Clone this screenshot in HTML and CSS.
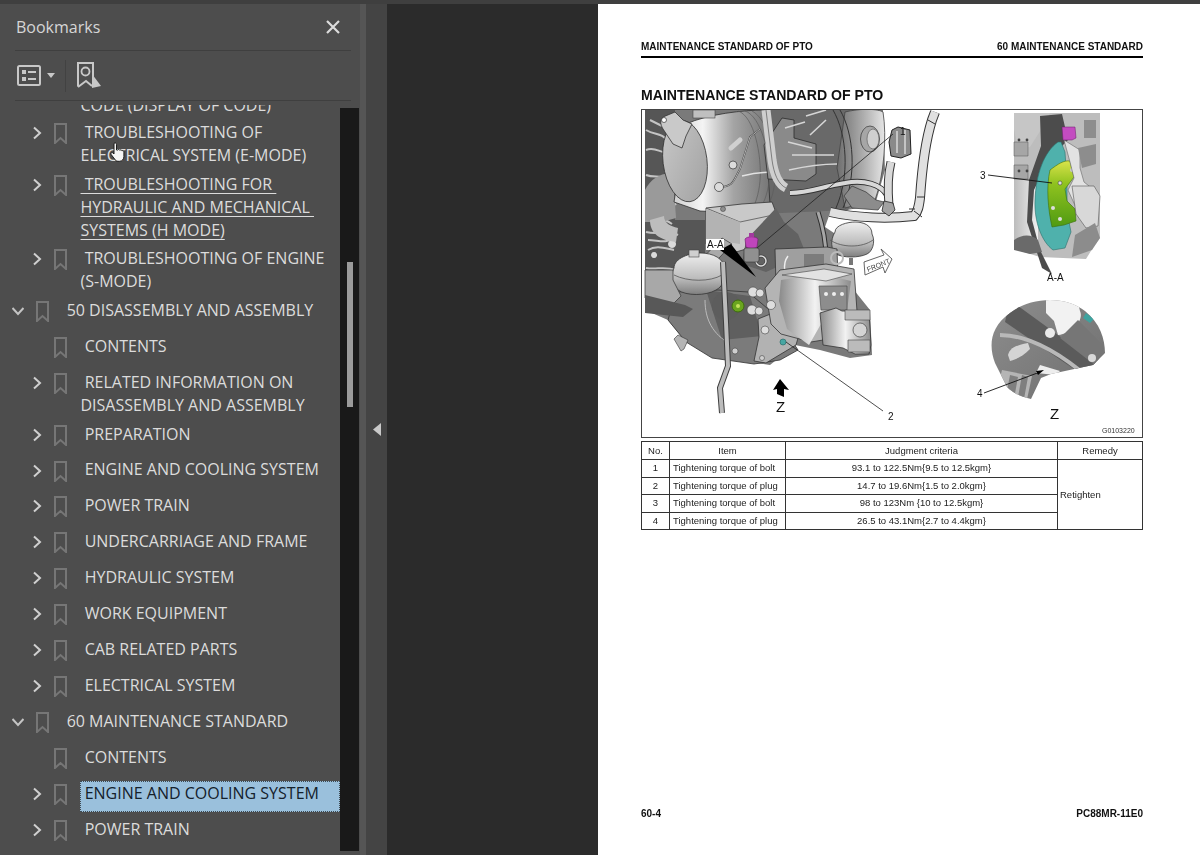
FILE: index.html
```html
<!DOCTYPE html>
<html lang="en">
<head>
<meta charset="utf-8">
<title>Bookmarks</title>
<link rel="stylesheet" href="styles.css">
</head>
<body>
<svg class="defs" width="0" height="0" aria-hidden="true">
  <defs>
    <symbol id="bm" viewBox="0 0 13 21"><path d="M1 1h11v19l-5.500-5L1 20z" fill="none" stroke="#767676" stroke-width="2"/></symbol>
    <symbol id="right" viewBox="0 0 12 14"><path d="M3 1.500 9 7l-6 5.500" fill="none" stroke="#d0d0d0" stroke-width="2"/></symbol>
    <symbol id="down" viewBox="0 0 12 14"><path d="M0.500 4 6 10l5.500-6" fill="none" stroke="#c4c4c4" stroke-width="2"/></symbol>
  </defs>
</svg>
<div class="topbar"></div>
<div class="app">
  <aside class="sidebar">
    <header class="side-head">
      <span class="side-title">Bookmarks</span>
      <svg class="close" width="16" height="16" viewBox="0 0 16 16"><path d="M2 2l12 12M14 2 2 14" stroke="#dcdcdc" stroke-width="2.200"/></svg>
    </header>
    <div class="toolbar">
      <button class="tool list-tool">
        <svg width="24" height="21" viewBox="0 0 24 21"><rect x="1" y="1" width="22" height="19" rx="1.500" fill="none" stroke="#c8c8c8" stroke-width="2"/><rect x="5" y="5" width="4" height="4" fill="#c8c8c8"/><rect x="5" y="12" width="4" height="4" fill="#c8c8c8"/><path d="M11 7h8M11 14h8" stroke="#c8c8c8" stroke-width="2"/></svg>
        <svg width="8" height="5" viewBox="0 0 8 5"><path d="M0 0h8L4 5z" fill="#c8c8c8"/></svg>
      </button>
      <span class="tool-sep"></span>
      <button class="tool">
        <svg width="25" height="27" viewBox="0 0 25 27"><path d="M1 24.500V1h15v18" fill="none" stroke="#c8c8c8" stroke-width="2"/><path d="M1 25l8-6 6 5" fill="none" stroke="#c8c8c8" stroke-width="2"/><circle cx="8.500" cy="9.500" r="4" fill="none" stroke="#c8c8c8" stroke-width="1.800"/><path d="M15 12l9 12-9 2z" fill="#c8c8c8"/></svg>
      </button>
    </div>
    <div class="tree-area">
      <div class="tree">
        <div class="row-clipped"><span>CODE (DISPLAY OF CODE)</span></div>

        <div class="row lvl1"><svg class="chev"><use href="#right"/></svg><svg class="bm"><use href="#bm"/></svg><span class="label">&nbsp;TROUBLESHOOTING OF ELECTRICAL SYSTEM (E-MODE)</span></div>
        <div class="row lvl1 row-tight"><svg class="chev"><use href="#right"/></svg><svg class="bm"><use href="#bm"/></svg><span class="label link">&nbsp;TROUBLESHOOTING FOR&nbsp;<br>HYDRAULIC AND MECHANICAL&nbsp;<br>SYSTEMS (H MODE)</span></div>
        <div class="row lvl1"><svg class="chev"><use href="#right"/></svg><svg class="bm"><use href="#bm"/></svg><span class="label">&nbsp;TROUBLESHOOTING OF ENGINE (S-MODE)</span></div>

        <div class="row lvl0"><svg class="chev"><use href="#down"/></svg><svg class="bm"><use href="#bm"/></svg><span class="label">&nbsp;50 DISASSEMBLY AND ASSEMBLY</span></div>
        <div class="row lvl1"><span class="chev"></span><svg class="bm"><use href="#bm"/></svg><span class="label">&nbsp;CONTENTS</span></div>
        <div class="row lvl1"><svg class="chev"><use href="#right"/></svg><svg class="bm"><use href="#bm"/></svg><span class="label">&nbsp;RELATED INFORMATION ON DISASSEMBLY AND ASSEMBLY</span></div>
        <div class="row lvl1"><svg class="chev"><use href="#right"/></svg><svg class="bm"><use href="#bm"/></svg><span class="label">&nbsp;PREPARATION</span></div>
        <div class="row lvl1"><svg class="chev"><use href="#right"/></svg><svg class="bm"><use href="#bm"/></svg><span class="label">&nbsp;ENGINE AND COOLING SYSTEM</span></div>
        <div class="row lvl1"><svg class="chev"><use href="#right"/></svg><svg class="bm"><use href="#bm"/></svg><span class="label">&nbsp;POWER TRAIN</span></div>
        <div class="row lvl1"><svg class="chev"><use href="#right"/></svg><svg class="bm"><use href="#bm"/></svg><span class="label">&nbsp;UNDERCARRIAGE AND FRAME</span></div>
        <div class="row lvl1"><svg class="chev"><use href="#right"/></svg><svg class="bm"><use href="#bm"/></svg><span class="label">&nbsp;HYDRAULIC SYSTEM</span></div>
        <div class="row lvl1"><svg class="chev"><use href="#right"/></svg><svg class="bm"><use href="#bm"/></svg><span class="label">&nbsp;WORK EQUIPMENT</span></div>
        <div class="row lvl1"><svg class="chev"><use href="#right"/></svg><svg class="bm"><use href="#bm"/></svg><span class="label">&nbsp;CAB RELATED PARTS</span></div>
        <div class="row lvl1"><svg class="chev"><use href="#right"/></svg><svg class="bm"><use href="#bm"/></svg><span class="label">&nbsp;ELECTRICAL SYSTEM</span></div>

        <div class="row lvl0"><svg class="chev"><use href="#down"/></svg><svg class="bm"><use href="#bm"/></svg><span class="label">&nbsp;60 MAINTENANCE STANDARD</span></div>
        <div class="row lvl1"><span class="chev"></span><svg class="bm"><use href="#bm"/></svg><span class="label">&nbsp;CONTENTS</span></div>
        <div class="row lvl1 row-current"><svg class="chev"><use href="#right"/></svg><svg class="bm"><use href="#bm"/></svg><span class="label selected">&nbsp;ENGINE AND COOLING SYSTEM</span></div>
        <div class="row lvl1"><svg class="chev"><use href="#right"/></svg><svg class="bm"><use href="#bm"/></svg><span class="label">&nbsp;POWER TRAIN</span></div>
      </div>
      <div class="scrolltrack"><div class="scrollthumb"></div></div>
    </div>
    <svg class="cursor" width="16" height="21" viewBox="0 0 16 21"><path d="M4 1.500c1-1 2.400-.6 2.500.8V8l1 .1c.6-.9 1.800-.7 2.200.1.700-.6 1.900-.3 2.200.5.900-.3 2 .3 2 1.400v4.400c0 2.500-1.800 4.800-4.300 4.800H8c-1.500 0-2.500-.8-3.200-2L1 12.300c-.6-1 .7-2.300 1.800-1.500L4 12z" fill="#f4f4f4" stroke="#1d1d1d" stroke-width="1"/></svg>
  </aside>
  <div class="splitter"></div>
  <div class="collapse"><svg width="8" height="13" viewBox="0 0 8 13"><path d="M8 0v13L0 6.500z" fill="#c9c9c9"/></svg></div>
  <div class="gutter"></div>
  <main class="page">
    <div class="page-head"><span>MAINTENANCE STANDARD OF PTO</span><span>60 MAINTENANCE STANDARD</span></div>
    <h1 class="page-title">MAINTENANCE STANDARD OF PTO</h1>
    <figure class="figure">
      <svg class="art" width="500" height="327" viewBox="642 110 500 327">
        <defs>
          <linearGradient id="cyl" x1="0" y1="0" x2="1" y2="0"><stop offset="0" stop-color="#d0d0d0"/><stop offset=".3" stop-color="#f4f4f4"/><stop offset=".62" stop-color="#a4a4a4"/><stop offset="1" stop-color="#767676"/></linearGradient>
          <linearGradient id="cyl2" x1="0" y1="0" x2="1" y2="0"><stop offset="0" stop-color="#6e6e6e"/><stop offset=".55" stop-color="#adadad"/><stop offset="1" stop-color="#e6e6e6"/></linearGradient>
          <linearGradient id="face" x1="0" y1="0" x2="1" y2="1"><stop offset="0" stop-color="#c9c9c9"/><stop offset="1" stop-color="#a0a0a0"/></linearGradient>
          <linearGradient id="pump" x1="0" y1="0" x2="1" y2="0"><stop offset="0" stop-color="#8a8a8a"/><stop offset=".5" stop-color="#f2f2f2"/><stop offset="1" stop-color="#8c8c8c"/></linearGradient>
          <linearGradient id="mnt" x1="0" y1="0" x2="0" y2="1"><stop offset="0" stop-color="#efefef"/><stop offset=".6" stop-color="#bdbdbd"/><stop offset="1" stop-color="#7f7f7f"/></linearGradient>
          <linearGradient id="zg" x1="0" y1="0" x2="1" y2="1"><stop offset="0" stop-color="#8f8f8f"/><stop offset="1" stop-color="#6c6c6c"/></linearGradient>
          <linearGradient id="grn" x1="0" y1="0" x2="0" y2="1"><stop offset="0" stop-color="#d9e34a"/><stop offset=".35" stop-color="#8fc21f"/><stop offset="1" stop-color="#4f9a12"/></linearGradient>
          <linearGradient id="secL" x1="0" y1="0" x2="1" y2="0"><stop offset="0" stop-color="#bcbcbc"/><stop offset="1" stop-color="#f0f0f0"/></linearGradient>
          <clipPath id="zclip"><path d="M1010 313c20-16 55-18 75-2 15 12 20 28 20 42l-12 12-42 9-10 4-10 21c-10-2-18-6-24-12l-12-24c-6-16-6-35 15-50z"/></clipPath>
        </defs>

        <!-- engine silhouette, so nothing shows white inside -->
        <path d="M645 110h238l2 60-10 35-45 8-5 14 12 8-8 24 41 51 2 45-22 3-30-8-25-5-25 20-35-5-35-15-20-10-12-15-23-10z" fill="#7a7a7a"/>

        <!-- left clutter -->
        <path d="M645 110h30v110h30v60l-25 30-35-10z" fill="#565656"/>
        <path d="M646 130c8 5 15 3 20 9M646 150c10-4 14 4 22 2M646 175c8 3 14 0 22 4M646 205c10-10 25-8 30 0M646 232c12 3 22-2 32 3M648 250c8-5 16-2 26 0M646 268c10 2 18-2 30 2M650 120l12 6M652 222c6-4 12-4 20 2M648 240c10 0 18 4 26-2" fill="none" stroke="#c4c4c4" stroke-width="2"/>
        <path d="M660 225a4 4 0 1 1 .1 0zM672 248a4 4 0 1 1 .1 0zM654 258a3 3 0 1 1 .1 0z" fill="#dadada"/>
        <path d="M645 190c6-12 18-18 28-16l3 44-14 4-17 0z" fill="#9a9a9a"/>
        <path d="M650 220c0 14 10 20 26 22l2-14c-8-2-14-5-14-12z" fill="#bdbdbd"/>

        <!-- dark rear block -->
        <path d="M760 110h90l10 75-12 25-90 4-10-60z" fill="#696969"/>
        <!-- main cylinder -->
        <path d="M686 124c22-10 58-14 78-14l6 94-30 9-40-2-26-9z" fill="url(#cyl)" stroke="#2f2f2f" stroke-width=".8"/>
        <path d="M745 111c16 5 26 44 24 70-1 12-6 26-12 31M752 111c16 8 24 44 23 68-1 14-5 26-12 34M738 111c16 5 24 44 22 70-1 12-5 26-10 31" fill="none" stroke="#5c5c5c" stroke-width=".7"/>
        <ellipse cx="685" cy="161" rx="22" ry="41" fill="url(#face)" stroke="#333" stroke-width=".8" transform="rotate(-7 685 161)"/>
        <path d="M663 117l12-5 8 8 9 4-6 12-4 12-9-4-10-15c-3-5-3-9 0-12z" fill="#c9c9c9" stroke="#333" stroke-width=".8"/>
        <circle cx="664" cy="120" r="2.500" fill="#fff" stroke="#333" stroke-width=".7"/>
        <rect x="693" y="110" width="22" height="8" fill="#bfbfbf" stroke="#444" stroke-width=".6"/>
        <path d="M720 187c14 0 14-8 20-18l10-32 10-8" fill="none" stroke="#3a3a3a" stroke-width="1.600"/>
        <path d="M720 187c14 0 14-8 20-18l10-32 10-8" fill="none" stroke="#e4e4e4" stroke-width=".7"/>
        <path d="M731 148l9-8" stroke="#d0d0d0" stroke-width="5" stroke-linecap="round"/>
        <circle cx="733" cy="165" r="4" fill="#dcdcdc" stroke="#333" stroke-width=".7"/>
        <circle cx="719" cy="187" r="4.500" fill="#dcdcdc" stroke="#333" stroke-width=".7"/>
        <path d="M742 176c8-2 22-4 34-4" fill="none" stroke="#e2e2e2" stroke-width="1.500"/>

        <!-- right drum -->
        <path d="M845 112c16-4 34-3 38 0 4 24 1 64-8 88l-30 8-8-40z" fill="url(#cyl2)" stroke="#444" stroke-width=".8"/>
        <path d="M840 110c14 24 17 66 3 98M833 110c14 24 17 66 3 98" fill="none" stroke="#333" stroke-width="1"/>
        <ellipse cx="870" cy="139" rx="9.500" ry="13" fill="#a6a6a6" stroke="#333" stroke-width=".7"/>
        <ellipse cx="873" cy="139" rx="6" ry="10" fill="#cfcfcf" stroke="#555" stroke-width=".6"/>
        <path d="M782 118l12 2 0 18 22 6 0 30-10 7-38-2-4-34z" fill="#8a8a8a" stroke="#2c2c2c" stroke-width=".8"/>
        <path d="M792 155h42M789 170c18-4 34-6 48-6M806 116l20-6M810 135l16-15M785 128l20-6M788 142l24 6" fill="none" stroke="#d6d6d6" stroke-width="1.600"/>
        <path d="M766 110l6 50c2 14 6 24 14 28" fill="none" stroke="#cfcfcf" stroke-width="9"/>
        <path d="M766 110l6 50c2 14 6 24 14 28" fill="none" stroke="#5a5a5a" stroke-width=".7"/>

        <!-- bridge pipes -->
        <path d="M790 193c20 0 30-6 55-10 20-4 36 2 42 12" fill="none" stroke="#333" stroke-width="6"/>
        <path d="M790 193c20 0 30-6 55-10 20-4 36 2 42 12" fill="none" stroke="#d8d8d8" stroke-width="4"/>
        <path d="M852 186l14 6 10 8 8 2-6 8-26-2-8-12z" fill="#8c8c8c" stroke="#333" stroke-width=".7"/>

        <!-- pipes on the right -->
        <path d="M891 162c-3 12-3 32-2 44" fill="none" stroke="#333" stroke-width="9"/>
        <path d="M891 162c-3 12-3 32-2 44" fill="none" stroke="#d9d9d9" stroke-width="7"/>
        <path d="M830 212c26 6 58 7 84 4 4-4 5-10 6-18 2-30 5-56 12-78l3-8" fill="none" stroke="#333" stroke-width="10"/>
        <path d="M830 212c26 6 58 7 84 4 4-4 5-10 6-18 2-30 5-56 12-78l3-8" fill="none" stroke="#e0e0e0" stroke-width="8"/>
        <path d="M909 209h6M914 211l8 6M917 197h8M928 120l7 4" stroke="#333" stroke-width="1"/>
        <path d="M884 201l9 2 2 7-6 6-7-5z" fill="#a2a2a2" stroke="#222" stroke-width=".8"/>
        <!-- connector -->
        <path d="M892 130l6-3 12 3 1 24-10 4-10-2-2-14z" fill="#8a8a8a" stroke="#222" stroke-width="1"/>
        <path d="M897 131v22M905 130v24" stroke="#d8d8d8" stroke-width="1.500"/>

        <!-- centre frame -->
        <path d="M706 208l36-4 30-2 6 16-8 24-34 10-30-8z" fill="#c9c9c9" stroke="#333" stroke-width=".8"/>
        <path d="M706 208l34 14 38-8" fill="none" stroke="#555" stroke-width=".8"/>
        <path d="M706 209l34 13v22l-34-5z" fill="#b3b3b3"/>
        <circle cx="723" cy="209" r="2.500" fill="#8e8e8e" stroke="#333" stroke-width=".5"/>
        <path d="M672 290l50-52 10 6-48 52z" fill="#a9a9a9" stroke="#333" stroke-width=".7"/>
        <path d="M776 208l8 14 14 12 8 20-40 18-24-8 4-24z" fill="#626262"/>
        <path d="M818 212c4 12 8 30 8 46" fill="none" stroke="#2d2d2d" stroke-width="5"/>
        <path d="M818 212c4 12 8 30 8 46" fill="none" stroke="#a6a6a6" stroke-width="3"/>

        <!-- right mount -->
        <path d="M835 232c0-7 13-10 20-10 8 0 17 3 17 12 4 8 0 18-5 20-8 4-24 4-31 0-5-4-6-14-1-22z" fill="url(#mnt)" stroke="#333" stroke-width=".8"/>
        <path d="M830 240c12 8 32 8 43 0" fill="none" stroke="#555" stroke-width=".8"/>
        <rect x="849" y="258" width="4" height="7" fill="#777"/>

        <!-- lower housing -->
        <path d="M668 320l8-28 42-2 30 2 26 22 24 36-18 10-26 4-42-6-26-16z" fill="#7b7b7b" stroke="#333" stroke-width=".8"/>
        <path d="M706 290l44 6 12 40-40 4z" fill="#5f5f5f"/>
        <path d="M759 337l-1-18 20-8 22 20-4 14-30 18-12-2z" fill="#b2b2b2" stroke="#333" stroke-width=".8"/>
        <path d="M688 340l-10-5-4 4 7 12 3-2z" fill="#b5b5b5" stroke="#333" stroke-width=".6"/>
        <circle cx="762" cy="358" r="2.500" fill="#cfcfcf" stroke="#333" stroke-width=".5"/>
        <circle cx="735" cy="351" r="3" fill="#cfcfcf" stroke="#333" stroke-width=".5"/>

        <!-- left mount -->
        <path d="M674 268c0-10 16-15 26-15 14 0 24 6 24 15 2 8 0 18-8 22-10 6-30 6-38 0-7-5-8-14-4-22z" fill="url(#mnt)" stroke="#333" stroke-width=".8"/>
        <path d="M674 275c14 7 36 7 48 0" fill="none" stroke="#555" stroke-width=".8"/>
        <rect x="689" y="250" width="10" height="7" fill="#cfcfcf" stroke="#444" stroke-width=".6"/>
        <path d="M645 270h28v10l8 16-8 8-16 2-12-8z" fill="#a8a8a8" stroke="#333" stroke-width=".7"/>
        <path d="M645 295l40 10 8 4-10 8-38-4z" fill="#585858"/>

        <!-- upper valve block -->
        <path d="M775 249l52-2 10 2 1 28-16 16-20 0-26-8z" fill="#9f9f9f" stroke="#333" stroke-width=".8"/>
        <path d="M804 254h20v20h-20z" fill="#7c7c7c"/>
        <path d="M788 256c-6 8-4 22 4 28" fill="none" stroke="#eee" stroke-width="1.500"/>
        <path d="M837 252a6 6 0 1 1 0 12 6 6 0 0 1 0-12z" fill="none" stroke="#bbb" stroke-width="2"/>
        <!-- main pump -->
        <path d="M780 270l46-6 28 5 3 42-20 6-8 22-18 3-30-8-10-10-6-36z" fill="#b4b4b4" stroke="#333" stroke-width=".8"/>
        <path d="M781 280l40-6 30 7-4 30-22 6-16 28-22-16-8-28z" fill="url(#pump)"/>
        <path d="M782 275l42-6 28 5-26 7z" fill="#e2e2e2" stroke="#444" stroke-width=".6"/>
        <path d="M819 286h28v24h-26z" fill="#8d8d8d" stroke="#444" stroke-width=".6"/>
        <circle cx="826" cy="294" r="2" fill="#eee"/><circle cx="834" cy="294" r="2" fill="#eee"/><circle cx="842" cy="294" r="2" fill="#eee"/>
        <!-- end pump -->
        <path d="M820 313l16-5 6 3 27 0 2 34-2 9-14 0-12-6-20-3z" fill="url(#pump)" stroke="#333" stroke-width=".8"/>
        <path d="M845 310h25v10h-25zM848 340h22v12h-22z" fill="#bbb" stroke="#444" stroke-width=".6"/>
        <circle cx="860" cy="330" r="7" fill="#d4d4d4" stroke="#444" stroke-width=".7"/>
        <!-- lobes -->
        <g fill="#dedede" stroke="#444" stroke-width=".6">
          <circle cx="753" cy="292" r="5"/><circle cx="760" cy="293" r="4"/><circle cx="752" cy="310" r="5"/><circle cx="759" cy="311" r="4"/><circle cx="771" cy="305" r="4.500"/><circle cx="765" cy="330" r="4"/>
        </g>
        <ellipse cx="726" cy="306" rx="14" ry="14" fill="#5d5d5d"/>
        <path d="M705 300c0 20 8 34 25 44" fill="none" stroke="#bbb" stroke-width="1"/>
        <!-- rod -->
        <path d="M723 262l3 60 2 44-8 22 2 25" fill="none" stroke="#3e3e3e" stroke-width="6"/>
        <path d="M723 262l3 60 2 44-8 22 2 25" fill="none" stroke="#bcbcbc" stroke-width="4"/>
        <!-- eye ring -->
        <circle cx="761" cy="261" r="5" fill="none" stroke="#444" stroke-width="3"/>
        <circle cx="761" cy="261" r="5" fill="none" stroke="#ddd" stroke-width="1.500"/>
        <!-- coloured callouts -->
        <path d="M745 239c2-3 11-3 13 0l-1 8c-2 2-9 2-11 0z" fill="#bf45bb" stroke="#6b1d68" stroke-width=".6"/>
        <rect x="749" y="233" width="5" height="4" fill="#a23a9e"/>
        <rect x="744" y="248" width="15" height="14" rx="2" fill="#909090" stroke="#333" stroke-width=".6"/>
        <circle cx="738" cy="306" r="6" fill="#6aa51f" stroke="#3d6d0e" stroke-width="1"/>
        <circle cx="738" cy="306" r="2" fill="#c3e25b"/>
        <circle cx="783" cy="342" r="3" fill="#47a7a3" stroke="#2b6f6d" stroke-width=".7"/>

        <!-- leaders -->
        <path d="M893 134 757 248" stroke="#222" stroke-width=".8"/>
        <path d="M786 342l97 69" stroke="#222" stroke-width=".8"/>
        <path d="M720 250l11-6 25 33z" fill="#000"/>
        <rect x="706" y="239" width="18" height="11" fill="#fff"/>
        <text x="707" y="248" class="lbl">A-A</text>
        <text x="900" y="135" class="lbl">1</text>
        <text x="888" y="420" class="lbl">2</text>

        <!-- front arrow -->
        <path d="M864 262l20-7-3-6 11 10-7 14-2-6-18 8z" fill="#fff" stroke="#555" stroke-width=".9"/>
        <text x="868" y="272" class="lbl-front" transform="rotate(-22 868 272)">FRONT</text>

        <!-- Z arrow -->
        <path d="M780 379l9 11-5-1 0 8-7-3 0-5-4 1z" fill="#000"/>
        <text x="776" y="412" class="lbl-z">Z</text>

        <!-- section A-A -->
        <path d="M1014 113h86v125l-6 8-8 13-46-2-26-8z" fill="#bdbdbd"/>
        <path d="M1014 180h24v66h-24z" fill="url(#secL)"/>
        <path d="M1014 113h36l-6 12-14 22-12 2-4-20z" fill="#c6c6c6"/>
        <path d="M1014 142h14v14h-14zM1014 165h14v14h-14z" fill="#a6a6a6" stroke="#555" stroke-width=".5"/>
        <circle cx="1019" cy="140" r="1.400" fill="#444"/><circle cx="1027" cy="140" r="1.400" fill="#444"/><circle cx="1019" cy="171" r="1.400" fill="#444"/><circle cx="1027" cy="171" r="1.400" fill="#444"/>
        <path d="M1040 116l22-2 6 26-20 20-14 30-2 30 8 30 12 24-10-6-15-46 2-42 12-34z" fill="#4c4c4c"/>
        <path d="M1058 142c-14 10-22 32-23 58-1 22 7 42 18 50l12-2 6-16-4-20v-30l-2-30-4-10z" fill="#4fb1ac" stroke="#2d6e6c" stroke-width=".6"/>
        <path d="M1050 170c8-6 14-10 20-9l4 16-9 12 2 12 8 8 1 12-12 4-12 2c-4-18-6-40-2-57z" fill="url(#grn)" stroke="#3c6f0e" stroke-width=".6"/>
        <circle cx="1060" cy="183" r="2" fill="#ddd" stroke="#333" stroke-width=".5"/><circle cx="1072" cy="170" r="2" fill="#ccc"/><circle cx="1053" cy="208" r="2" fill="#ddd"/><circle cx="1060" cy="219" r="2" fill="#ddd"/>
        <path d="M1064 140l16 10 0 18 4 14 10 8-4 26-12-4-10-22 6-12-4-16z" fill="#e2e2e2" stroke="#666" stroke-width=".6"/>
        <path d="M1072 186h22l6 10-2 30-12 2-10-14-2-14z" fill="#d8d8d8" stroke="#555" stroke-width=".6"/>
        <path d="M1084 120h12v18h-12zM1078 148l18-4v20l-14 4z" fill="#8d8d8d"/>
        <path d="M1075 235l20-12 5 15-8 12-20 7z" fill="#8c8c8c"/>
        <path d="M1014 240c8-6 18-6 24 0l4 12-12 2-16-4z" fill="#6a6a6a"/>
        <path d="M1062 127h13l1 11-4 2h-9z" fill="#c34cc0" stroke="#6a1f68" stroke-width=".5"/>
        <path d="M988 175l64 8" stroke="#111" stroke-width=".9"/>
        <text x="980" y="179" class="lbl">3</text>
        <text x="1047" y="281" class="lbl">A-A</text>

        <!-- view Z -->
        <g clip-path="url(#zclip)">
          <rect x="985" y="295" width="125" height="115" fill="url(#zg)"/>
          <path d="M1010 300l96 70-16 10-85-58z" fill="#5b5b5b"/>
          <path d="M1000 335c30 0 60 18 90 44" fill="none" stroke="#b9b9b9" stroke-width="4"/>
          <path d="M1046 295h30l4 16c4 8-6 22-22 24l-4-14-8-8z" fill="#f2f2f2"/>
          <path d="M1078 320l26 26-8 20-36-28z" fill="#767676"/>
          <path d="M1008 355c2-8 10-10 20-12l2 6c-6 6-12 10-20 12z" fill="#d4d4d4"/>
          <path d="M1002 370l30 6-6 28-30-10z" fill="#b5b5b5"/>
          <path d="M1010 375l8 2-4 22-8-3zM1022 375l6 2-4 22-6-2z" fill="#7f7f7f"/>
          <path d="M1040 365l20 6-4 4-20-2z" fill="#ededed"/>
          <circle cx="1050" cy="333" r="5" fill="#e9e9e9"/>
          <circle cx="1092" cy="358" r="4" fill="#d9d9d9"/>
          <path d="M1086 313l8 6-4 4-7-5z" fill="#3da39f"/>
        </g>
        <path d="M984 393l56-21" stroke="#111" stroke-width=".9"/>
        <path d="M1044 370l-8 1 2 4z" fill="#000"/>
        <text x="977" y="397" class="lbl">4</text>
        <text x="1050" y="419" class="lbl-z">Z</text>
        <text x="1102" y="433" class="lbl-id">G0103220</text>
      </svg>
    </figure>
    <table class="spec">
      <colgroup><col class="c-no"><col class="c-item"><col class="c-crit"><col class="c-rem"></colgroup>
      <thead><tr><th>No.</th><th>Item</th><th>Judgment criteria</th><th>Remedy</th></tr></thead>
      <tbody>
        <tr><td class="ctr">1</td><td>Tightening torque of bolt</td><td class="ctr">93.1 to 122.5Nm{9.5 to 12.5kgm}</td><td rowspan="4" class="rem">Retighten</td></tr>
        <tr><td class="ctr">2</td><td>Tightening torque of plug</td><td class="ctr">14.7 to 19.6Nm{1.5 to 2.0kgm}</td></tr>
        <tr><td class="ctr">3</td><td>Tightening torque of bolt</td><td class="ctr">98 to 123Nm {10 to 12.5kgm}</td></tr>
        <tr><td class="ctr">4</td><td>Tightening torque of plug</td><td class="ctr">26.5 to 43.1Nm{2.7 to 4.4kgm}</td></tr>
      </tbody>
    </table>
    <div class="page-foot"><span>60-4</span><span>PC88MR-11E0</span></div>
  </main>
</div>
</body>
</html>
```

FILE: styles.css
```css
* { box-sizing: border-box; }
html, body { margin: 0; height: 100%; overflow: hidden; }
body { display: flex; flex-direction: column; background: #2b2b2b; font-family: "Open Sans", "Noto Sans", sans-serif; }
.defs { position: absolute; }
.topbar { height: 4px; background: #3f3f3f; flex: none; }
.app { flex: 1; display: flex; min-height: 0; }

.sidebar { position: relative; width: 360px; flex: none; background: #4d4d4d; display: flex; flex-direction: column; }
.side-head { height: 47px; margin: 0 9px 0 15px; border-bottom: 1px solid #3f3f3f; display: flex; align-items: center; justify-content: space-between; padding: 0 10px 0 1px; }
.side-title { font-size: 16px; color: #d6d6d6; }
.toolbar { height: 50px; margin: 0 9px 0 15px; border-bottom: 1px solid #3f3f3f; display: flex; align-items: center; }
.tool { background: none; border: 0; padding: 0; display: flex; align-items: center; gap: 6px; }
.list-tool { margin-left: 2px; }
.tool-sep { width: 1px; height: 32px; background: #424242; margin: 0 11px 0 10px; }
.tree-area { flex: 1; display: flex; min-height: 0; margin-top: 4px; }
.tree { width: 340px; flex: none; overflow: hidden; color: #dcdcdc; font-size: 16px; line-height: 23px; }
.scrolltrack { width: 19px; margin: 3px 0 4px; background: #191919; padding: 154px 0 0 7px; }
.scrollthumb { width: 6px; height: 145px; background: #9b9b9b; }
.row-clipped { height: 10px; overflow: hidden; padding-left: 80.500px; }
.row-clipped span { display: block; margin-top: -11px; white-space: nowrap; }
.row { display: flex; min-height: 35.900px; }
.row-tight { margin-bottom: -.7px; }
.row-current { margin-top: .8px; }
.lvl1 { padding-left: 31px; }
.lvl0 { padding-left: 12px; }
.chev { width: 12px; height: 14px; margin-top: 11px; flex: none; }
.bm { width: 13px; height: 21px; margin: 8px 13.500px 0 11px; flex: none; }
.lvl0 .bm { margin-left: 12px; }
.label { flex: 1; padding-top: 5.900px; }
.link { text-decoration: underline; text-underline-offset: 3px; }
.selected { margin: 5px 0 0 -1px; padding: .900px 0 0 1px; background: #9ac0dc; color: #14212b; outline: 1px dotted #3e4a52; outline-offset: -1px; }
.cursor { position: absolute; left: 110px; top: 138px; }

.splitter { width: 6px; flex: none; background: #555; }
.collapse { width: 21px; flex: none; background: #444; display: flex; align-items: center; justify-content: center; }
.gutter { width: 211px; flex: none; background: #2b2b2b; }

.page { flex: 1; background: #fff; padding: 37px 58px 35px 43px; display: flex; flex-direction: column; font-family: "Liberation Sans", Arial, sans-serif; color: #111; filter: blur(.4px); }
.page-head { display: flex; justify-content: space-between; font-size: 10px; font-weight: 700; line-height: 12px; padding-bottom: 3px; border-bottom: 2px solid #000; }
.page-title { margin: 29px 0 6px; font-size: 14.100px; line-height: 16px; font-weight: 700; }
.figure { margin: 0; height: 329px; border: 1px solid #444; flex: none; }
.art { display: block; }
.lbl { font: 10px "Liberation Sans", sans-serif; fill: #111; }
.lbl-front { font: 7px "Liberation Sans", sans-serif; fill: #444; }
.lbl-z { font: 15px "Liberation Sans", sans-serif; fill: #111; }
.lbl-id { font: 7px "Liberation Sans", sans-serif; fill: #333; }

.spec { width: 501px; margin-top: 3px; border-collapse: collapse; table-layout: fixed; font-size: 9.500px; color: #222; flex: none; }
.c-no { width: 28px; }
.c-item { width: 116px; }
.c-crit { width: 272px; }
.c-rem { width: 85px; }
.spec th, .spec td { border: 1px solid #333; padding: 0 3px; font-weight: 400; height: 17.500px; line-height: 12px; white-space: nowrap; }
.spec th { height: 18px; text-align: center; }
.spec .rem { padding-left: 2px; }
.ctr { text-align: center; }
.page-foot { margin-top: auto; display: flex; justify-content: space-between; font-size: 10px; font-weight: 700; line-height: 12px; }
```
